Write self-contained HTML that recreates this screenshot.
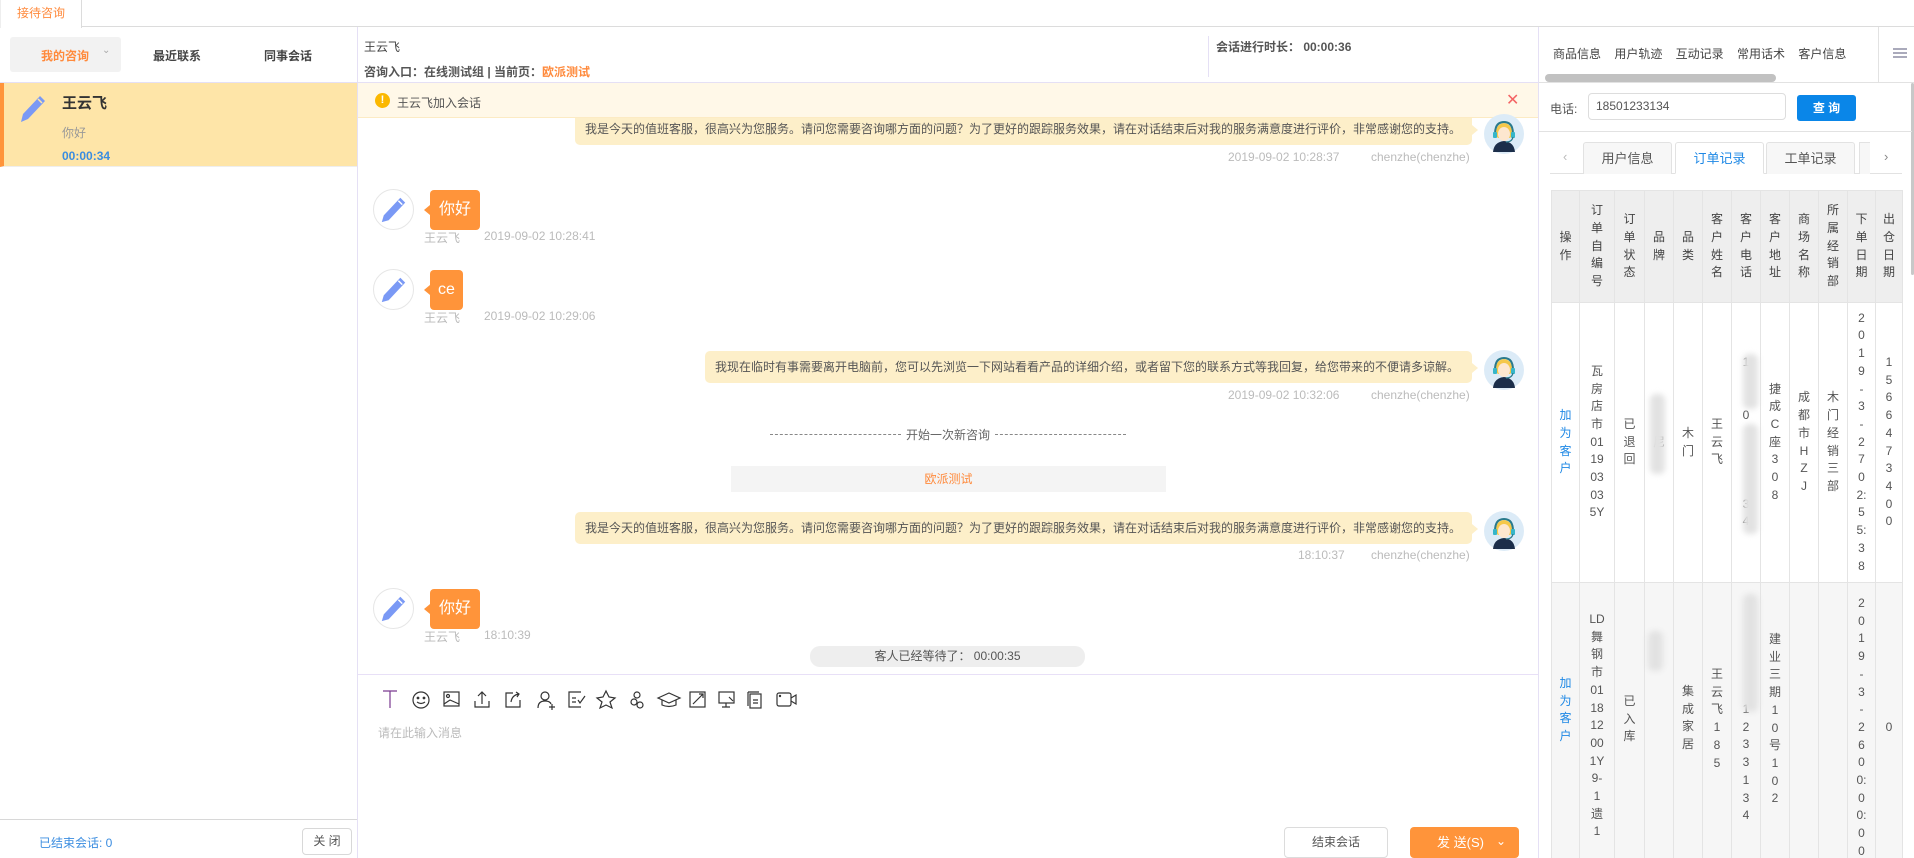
<!DOCTYPE html>
<html><head><meta charset="utf-8"><style>
*{margin:0;padding:0;box-sizing:border-box}
body{width:1914px;height:858px;overflow:hidden;background:#fff;font-family:"Liberation Sans","Noto Sans CJK SC",sans-serif;font-size:12px;color:#333;position:relative}
.a{position:absolute}
.bubA{position:absolute;background:#fdefc9;border-radius:5px;color:#555;font-size:12px;line-height:32px;padding:0 10px;white-space:nowrap}
.bubA:after{content:"";position:absolute;right:-6px;top:12px;border-left:6px solid #fdefc9;border-top:5px solid transparent;border-bottom:5px solid transparent}
.meta{position:absolute;color:#bbb;font-size:12px;white-space:nowrap}
.bubC{position:absolute;background:#ff943a;color:#fff;border-radius:4px;font-size:16px;height:40px;line-height:40px;padding:0 9px}
.bubC:before{content:"";position:absolute;left:-6px;top:15px;border-right:6px solid #ff943a;border-top:5px solid transparent;border-bottom:5px solid transparent}
.av{position:absolute;width:41px;height:41px;border-radius:50%;border:1px solid #e6e6e6;background:#fff}
.tbl{position:absolute;left:1551px;top:190px;border-collapse:collapse;table-layout:fixed;font-size:12px;color:#555}
.tbl td{border:1px solid #e4e4e4;text-align:center;vertical-align:middle;line-height:17.7px;padding:0;overflow:hidden}
.tbl tr.h td{background:#eee;color:#444;height:112px}
.blur{position:absolute;background:#e2e2e2;filter:blur(3px);border-radius:6px}
</style></head><body>

<!-- top tab bar -->
<div class="a" style="left:0;top:0;width:1914px;height:27px;border-bottom:1px solid #dcdcdc"></div>
<div class="a" style="left:0;top:0;width:82px;height:28px;border-right:1px solid #dcdcdc;border-left:1px solid #eee;background:#fff;color:#ff8a3c;font-size:12px;line-height:27px;text-align:center">接待咨询</div>

<!-- left panel -->
<div class="a" style="left:357px;top:27px;width:1px;height:831px;background:#e5e0f5"></div>
<div class="a" style="left:10px;top:37px;width:111px;height:35px;background:#f2f2f2;border-radius:3px"></div>
<div class="a" style="left:41px;top:47px;color:#ff8a3c;font-weight:bold;font-size:12px">我的咨询</div>
<div class="a" style="left:102px;top:45px;color:#aaa;font-size:10px">&#8964;</div>
<div class="a" style="left:153px;top:47px;color:#444;font-weight:bold;font-size:12px">最近联系</div>
<div class="a" style="left:264px;top:47px;color:#444;font-weight:bold;font-size:12px">同事会话</div>
<div class="a" style="left:0;top:82px;width:357px;height:1px;background:#e5e0f5"></div>
<div class="a" style="left:0;top:83px;width:357px;height:84px;background:#fee5a8;border-left:4px solid #ff943a;border-bottom:1px solid #eee"></div>
<svg class="a" style="left:19px;top:94px" width="28" height="30" viewBox="0 0 28 30"><path d="M21 2 L26 7 L9 25 L2 28 L4 20 Z" fill="#7a99f5"/><path d="M19 5 L23 9" stroke="#fee5a8" stroke-width="1.5"/></svg>
<div class="a" style="left:62px;top:92px;font-size:15px;font-weight:bold;color:#333">王云飞</div>
<div class="a" style="left:62px;top:124px;font-size:12px;color:#999">你好</div>
<div class="a" style="left:62px;top:149px;font-size:12px;color:#3b8de0;font-weight:bold">00:00:34</div>
<div class="a" style="left:0;top:819px;width:357px;height:1px;background:#d8d8d8"></div>
<div class="a" style="left:39px;top:834px;font-size:12px;color:#3b8de0">已结束会话: 0</div>
<div class="a" style="left:302px;top:828px;width:50px;height:27px;border:1px solid #d8d8d8;border-radius:4px;text-align:center;line-height:25px;color:#555;font-size:12px">关 闭</div>

<!-- center header -->
<div class="a" style="left:364px;top:38px;color:#444;font-size:12px">王云飞</div>
<div class="a" style="left:364px;top:63px;color:#555;font-size:12px;font-weight:bold">咨询入口：在线测试组 | 当前页：<span style="color:#ff8a3c">欧派测试</span></div>
<div class="a" style="left:1208px;top:36px;width:1px;height:41px;background:#e5e0f5"></div>
<div class="a" style="left:1216px;top:38px;color:#555;font-size:12px;font-weight:bold">会话进行时长： 00:00:36</div>
<div class="a" style="left:358px;top:82px;width:1180px;height:1px;background:#e5e0f5"></div>
<div class="a" style="left:1538px;top:27px;width:1px;height:831px;background:#e5e0f5"></div>

<!-- messages -->
<div class="bubA" style="left:575px;top:113px;width:897px">我是今天的值班客服，很高兴为您服务。请问您需要咨询哪方面的问题？为了更好的跟踪服务效果，请在对话结束后对我的服务满意度进行评价，非常感谢您的支持。</div>
<div class="a" style="left:358px;top:83px;width:1180px;height:35px;background:#fff8e8;border-bottom:1px solid #fcebc4"></div>
<div class="a" style="left:375px;top:93px;width:15px;height:15px;border-radius:50%;background:#fbb800;color:#fff;font-size:11px;font-weight:bold;text-align:center;line-height:15px">!</div>
<div class="a" style="left:397px;top:94px;font-size:12px;color:#555">王云飞加入会话</div>
<div class="a" style="left:1506px;top:90px;color:#f46464;font-size:16px">✕</div>

<svg width="0" height="0" style="position:absolute"><defs>
<symbol id="ag" viewBox="0 0 40 40"><circle cx="20" cy="20" r="20" fill="#dcebf7"/><path d="M9 38 Q10 28 20 27 Q30 28 31 38 Z" fill="#1c2e4a"/><path d="M12 22 Q11 10 20 9 Q29 10 28 22 L26 24 L14 24 Z" fill="#f5c84a"/><ellipse cx="20" cy="20" rx="6" ry="7" fill="#fde7cf"/><path d="M11 20 Q11 8 20 8 Q29 8 29 20" stroke="#2a7a8c" stroke-width="2" fill="none"/><rect x="9" y="18" width="4" height="6" rx="1" fill="#36b6c9"/><rect x="27" y="18" width="4" height="6" rx="1" fill="#36b6c9"/><path d="M29 23 Q28 28 22 28" stroke="#2a7a8c" stroke-width="1.2" fill="none"/></symbol>
<symbol id="pc" viewBox="0 0 40 40"><path d="M27 8 L32 13 L15 31 L8 33 L10 26 Z" fill="#7a99f5"/><path d="M25 11 L29 15" stroke="#fff" stroke-width="1.5"/></symbol>
</defs></svg>

<svg class="a" style="left:1484px;top:114px" width="40" height="40"><use href="#ag"/></svg>
<div class="meta" style="left:1228px;top:150px">2019-09-02 10:28:37</div>
<div class="meta" style="left:1371px;top:150px">chenzhe(chenzhe)</div>

<div class="av" style="left:373px;top:189px"><svg width="39" height="39"><use href="#pc"/></svg></div>
<div class="bubC" style="left:430px;top:190px">你好</div>
<div class="meta" style="left:424px;top:229px">王云飞</div>
<div class="meta" style="left:484px;top:229px">2019-09-02 10:28:41</div>

<div class="av" style="left:373px;top:269px"><svg width="39" height="39"><use href="#pc"/></svg></div>
<div class="bubC" style="left:430px;top:270px;padding:0 8px">ce</div>
<div class="meta" style="left:424px;top:309px">王云飞</div>
<div class="meta" style="left:484px;top:309px">2019-09-02 10:29:06</div>

<div class="bubA" style="left:705px;top:351px;width:767px">我现在临时有事需要离开电脑前，您可以先浏览一下网站看看产品的详细介绍，或者留下您的联系方式等我回复，给您带来的不便请多谅解。</div>
<svg class="a" style="left:1484px;top:350px" width="40" height="40"><use href="#ag"/></svg>
<div class="meta" style="left:1228px;top:388px">2019-09-02 10:32:06</div>
<div class="meta" style="left:1371px;top:388px">chenzhe(chenzhe)</div>

<div class="a" style="left:770px;top:434px;width:131px;border-top:1px dashed #888"></div>
<div class="a" style="left:906px;top:426px;font-size:12px;color:#666">开始一次新咨询</div>
<div class="a" style="left:995px;top:434px;width:131px;border-top:1px dashed #888"></div>
<div class="a" style="left:731px;top:466px;width:435px;height:26px;background:#f4f4f4;color:#ff8a3c;text-align:center;line-height:26px;font-size:12px">欧派测试</div>

<div class="bubA" style="left:575px;top:512px;width:897px">我是今天的值班客服，很高兴为您服务。请问您需要咨询哪方面的问题？为了更好的跟踪服务效果，请在对话结束后对我的服务满意度进行评价，非常感谢您的支持。</div>
<svg class="a" style="left:1484px;top:511px" width="40" height="40"><use href="#ag"/></svg>
<div class="meta" style="left:1298px;top:548px">18:10:37</div>
<div class="meta" style="left:1371px;top:548px">chenzhe(chenzhe)</div>

<div class="av" style="left:373px;top:588px"><svg width="39" height="39"><use href="#pc"/></svg></div>
<div class="bubC" style="left:430px;top:589px">你好</div>
<div class="meta" style="left:424px;top:628px">王云飞</div>
<div class="meta" style="left:484px;top:628px">18:10:39</div>

<div class="a" style="left:810px;top:646px;width:275px;height:21px;background:#eee;border-radius:10px;text-align:center;line-height:21px;font-size:12px;color:#555">客人已经等待了： 00:00:35</div>

<!-- input area -->
<div class="a" style="left:358px;top:674px;width:1180px;height:1px;background:#e8e0f7"></div>
<svg class="a" style="left:380px;top:688px" width="430" height="24" fill="none" stroke="#333" stroke-width="1.2">
 <path d="M3 3 H17 M10 3 V20" stroke="#7a3a90"/>
 <circle cx="41" cy="12" r="8"/><circle cx="38" cy="10" r=".8" fill="#333"/><circle cx="44" cy="10" r=".8" fill="#333"/><path d="M37 14 Q41 17 45 14"/>
 <rect x="64" y="4" width="15" height="14"/><circle cx="68" cy="8" r="1.5"/><path d="M64 16 L70 12 L79 16"/>
 <path d="M95 13 V19 H109 V13 M102 16 V4 M98 8 L102 4 L106 8"/>
 <path d="M133 5 H126 V19 H140 V12 M131 14 Q132 7 139 6 M136 4 L139 6 L137 9"/>
 <circle cx="165" cy="8" r="4"/><path d="M158 20 Q158 13 165 13 Q170 13 171 16 M169 19 H175 M172 16 V22"/>
 <path d="M201 4 H189 V19 H201 M192 10 H196 M192 14 H196 M198 12 L200 15 L205 8"/>
 <path d="M226 3 L229 9 L235 10 L230 14 L232 20 L226 17 L220 20 L222 14 L217 10 L223 9 Z"/>
 <circle cx="257" cy="7" r="3"/><circle cx="254" cy="14" r="3"/><circle cx="260" cy="17" r="3"/>
 <path d="M278 10 L289 5 L300 10 L289 15 Z M282 12 V17 Q289 20 296 17 V12"/>
 <rect x="310" y="4" width="15" height="15"/><path d="M313 16 L323 6 M319 6 H323 V10"/>
 <rect x="339" y="4" width="15" height="11"/><path d="M346 15 V19 M342 19 H350 M349 9 L353 13"/>
 <rect x="370" y="6" width="11" height="14"/><path d="M368 4 H379 M368 4 V18 M373 12 H378 M373 15 H378"/>
 <rect x="397" y="5" width="14" height="13" rx="2"/><path d="M411 10 L416 7 V16 L411 13"/><circle cx="400" cy="8" r=".6" fill="#333"/>
</svg>
<div class="a" style="left:378px;top:724px;font-size:12px;color:#bbb">请在此输入消息</div>
<div class="a" style="left:1284px;top:827px;width:104px;height:31px;border:1px solid #dcdcdc;border-radius:4px;text-align:center;line-height:29px;font-size:12px;color:#555">结束会话</div>
<div class="a" style="left:1410px;top:827px;width:109px;height:31px;background:#ff943a;border-radius:4px;color:#fff;font-size:13px;line-height:31px"><span style="margin-left:27px">发 送(S)</span><span style="position:absolute;left:86px;top:-1px;font-size:12px">&#8964;</span></div>

<!-- right panel -->
<div class="a" style="left:1553px;top:45px;font-size:12px;color:#444;white-space:nowrap">商品信息&nbsp;&nbsp;&nbsp;&nbsp;用户轨迹&nbsp;&nbsp;&nbsp;&nbsp;互动记录&nbsp;&nbsp;&nbsp;&nbsp;常用话术&nbsp;&nbsp;&nbsp;&nbsp;客户信息</div>
<div class="a" style="left:1878px;top:27px;width:1px;height:55px;background:#e2e2e2"></div>
<div class="a" style="left:1893px;top:48px;width:14px;height:2px;background:#aab;box-shadow:0 4px 0 #aab,0 8px 0 #aab"></div>
<div class="a" style="left:1545px;top:74px;width:231px;height:8px;background:#c1c1c1;border-radius:4px"></div>
<div class="a" style="left:1539px;top:82px;width:375px;height:1px;background:#e2e2e2"></div>
<div class="a" style="left:1911px;top:83px;width:3px;height:192px;background:#c8c8c8;border-radius:2px"></div>
<div class="a" style="left:1550px;top:100px;font-size:12px;color:#555">电话:</div>
<div class="a" style="left:1588px;top:93px;width:198px;height:27px;border:1px solid #ddd;border-radius:4px;padding-left:7px;line-height:25px;font-size:12px;color:#555">18501233134</div>
<div class="a" style="left:1797px;top:95px;width:59px;height:26px;background:#0a86e8;border-radius:3px;color:#fff;text-align:center;line-height:26px;font-size:12px;font-weight:bold">查 询</div>
<div class="a" style="left:1539px;top:131px;width:373px;height:1px;background:#e2e2e2"></div>
<div class="a" style="left:1563px;top:149px;color:#bbb;font-size:13px">&lsaquo;</div>
<div class="a" style="left:1884px;top:149px;color:#888;font-size:13px">&rsaquo;</div>
<div class="a" style="left:1550px;top:173px;width:352px;height:1px;background:#e2e2e2"></div>
<div class="a" style="left:1583px;top:142px;width:89px;height:32px;border:1px solid #e2e2e2;border-bottom:none;background:#f7f7f7;text-align:center;line-height:32px;font-size:13px;color:#555;border-radius:3px 3px 0 0">用户信息</div>
<div class="a" style="left:1675px;top:142px;width:89px;height:32px;border:1px solid #e2e2e2;border-bottom:1px solid #fff;background:#fff;text-align:center;line-height:32px;font-size:13px;color:#1e88e5;border-radius:3px 3px 0 0">订单记录</div>
<div class="a" style="left:1766px;top:142px;width:89px;height:32px;border:1px solid #e2e2e2;border-bottom:none;background:#f7f7f7;text-align:center;line-height:32px;font-size:13px;color:#555;border-radius:3px 3px 0 0">工单记录</div>
<div class="a" style="left:1859px;top:142px;width:11px;height:32px;border:1px solid #e2e2e2;border-right:none;border-bottom:none;background:#f7f7f7"></div>

<div class="a" style="left:1539px;top:174px;width:375px;height:684px;overflow:hidden">
<table class="tbl" style="left:12px;top:16px">
<colgroup><col style="width:28px"><col style="width:35px"><col style="width:30px"><col style="width:29px"><col style="width:29px"><col style="width:29px"><col style="width:29px"><col style="width:29px"><col style="width:29px"><col style="width:29px"><col style="width:28px"><col style="width:27px"></colgroup>
<tr class="h"><td>操<br>作</td><td>订<br>单<br>自<br>编<br>号</td><td>订<br>单<br>状<br>态</td><td>品<br>牌</td><td>品<br>类</td><td>客<br>户<br>姓<br>名</td><td>客<br>户<br>电<br>话</td><td>客<br>户<br>地<br>址</td><td>商<br>场<br>名<br>称</td><td>所<br>属<br>经<br>销<br>部</td><td>下<br>单<br>日<br>期</td><td>出<br>仓<br>日<br>期</td></tr>
<tr style="height:280px"><td style="color:#1e88e5">加<br>为<br>客<br>户</td><td>瓦<br>房<br>店<br>市<br>01<br>19<br>03<br>03<br>5Y</td><td>已<br>退<br>回</td><td>尼</td><td style="color:#555">木<br>门</td><td>王<br>云<br>飞</td><td>1<br>&nbsp;<br>&nbsp;<br>0<br>&nbsp;<br>&nbsp;<br>&nbsp;<br>&nbsp;<br>3<br>4</td><td>捷<br>成<br>C<br>座<br>3<br>0<br>8</td><td>成<br>都<br>市<br>H<br>Z<br>J</td><td>木<br>门<br>经<br>销<br>三<br>部</td><td>2<br>0<br>1<br>9<br>-<br>3<br>-<br>2<br>7<br>0<br>2:<br>5<br>5:<br>3<br>8</td><td>1<br>5<br>6<br>6<br>4<br>7<br>3<br>4<br>0<br>0</td></tr>
<tr style="height:300px;background:#f6f6f6"><td style="color:#1e88e5;vertical-align:top;padding-top:92px">加<br>为<br>客<br>户</td><td style="vertical-align:top;padding-top:28px">LD<br>舞<br>钢<br>市<br>01<br>18<br>12<br>00<br>1Y<br>9-<br>1<br>遗<br>1</td><td style="vertical-align:top;padding-top:110px">已<br>入<br>库</td><td></td><td style="vertical-align:top;padding-top:100px">集<br>成<br>家<br>居</td><td style="vertical-align:top;padding-top:83px">王<br>云<br>飞<br>1<br>8<br>5</td><td style="vertical-align:top;padding-top:118px">1<br>2<br>3<br>3<br>1<br>3<br>4</td><td style="vertical-align:top;padding-top:48px">建<br>业<br>三<br>期<br>1<br>0<br>号<br>1<br>0<br>2</td><td></td><td></td><td style="vertical-align:top;padding-top:12px">2<br>0<br>1<br>9<br>-<br>3<br>-<br>2<br>6<br>0<br>0:<br>0<br>0:<br>0<br>0</td><td style="vertical-align:top;padding-top:136px">0</td></tr>
</table>
<div class="blur" style="left:111px;top:220px;width:15px;height:80px"></div>
<div class="blur" style="left:204px;top:180px;width:15px;height:55px"></div>
<div class="blur" style="left:204px;top:250px;width:15px;height:110px"></div>
<div class="blur" style="left:109px;top:457px;width:15px;height:40px"></div>
<div class="blur" style="left:204px;top:420px;width:15px;height:118px"></div>
</div>
</body></html>
